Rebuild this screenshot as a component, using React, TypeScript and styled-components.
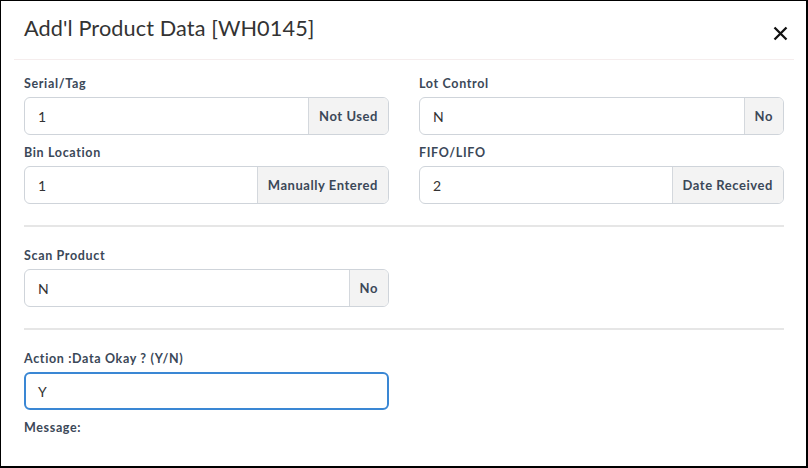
import React from "react";
import styled, { createGlobalStyle } from "styled-components";

const GlobalStyle = createGlobalStyle`
  html, body {
    margin: 0;
    padding: 0;
    background: #fff;
    font-family: Lato, "Open Sans", "Liberation Sans", sans-serif;
  }
  * { box-sizing: border-box; }
`;

const Modal = styled.div`
  width: 808px;
  height: 468px;
  background: #fff;
  border: 1px solid #000;
  border-right-width: 2px;
  border-bottom-width: 2px;
  display: flex;
  flex-direction: column;
`;

const Header = styled.div`
  height: 59px;
  margin: 0 12px 0 13px;
  padding: 0 6px 0 10px;
  border-bottom: 1px solid #f5eded;
  display: flex;
  align-items: center;
  justify-content: space-between;
`;

const Title = styled.h1`
  margin: 0 0 5px;
  font-size: 21.7px;
  font-weight: 400;
  color: #333;
  letter-spacing: 0.1px;
`;

const CloseButton = styled.button`
  border: 0;
  background: none;
  padding: 0;
  width: 16px;
  height: 16px;
  margin-top: 6px;
  display: flex;
  align-items: center;
  justify-content: center;
  cursor: pointer;
`;

const Body = styled.div`
  padding: 16px 23px 0;
  display: flex;
  flex-direction: column;
`;

const Grid = styled.div`
  display: grid;
  grid-template-columns: 365px 365px;
  column-gap: 30px;
  row-gap: 10px;
`;

const Field = styled.div`
  display: flex;
  flex-direction: column;
`;

const Label = styled.label`
  font-size: 12.5px;
  line-height: 16px;
  font-weight: 700;
  color: #3b4858;
  letter-spacing: 0.65px;
  margin-bottom: 5px;
`;

const InputGroup = styled.div<{ $focused?: boolean }>`
  display: flex;
  height: 38px;
  border: ${(p) => (p.$focused ? "2px solid #3a87d4" : "1px solid #cfd4da")};
  border-radius: 6px;
  overflow: hidden;
  background: #fff;
`;

const Value = styled.div<{ $focused?: boolean }>`
  flex: 1;
  display: flex;
  align-items: center;
  padding-left: ${(p) => (p.$focused ? "12px" : "13px")};
  font-size: 14px;
  color: #333;
`;

const Addon = styled.div`
  display: flex;
  align-items: center;
  padding: 0 10px;
  background: #f3f3f3;
  border-left: 1px solid #d4d8dd;
  font-size: 13px;
  font-weight: 700;
  color: #3b4858;
  letter-spacing: 0.55px;
`;

const Divider = styled.hr`
  margin: 21px 0 21px;
  border: 0;
  height: 2px;
  background: #e6e6e6;
  width: 760px;
`;

const Message = styled.div`
  margin-top: 10px;
  font-size: 12.5px;
  line-height: 16px;
  font-weight: 700;
  color: #3b4858;
  letter-spacing: 0.65px;
`;

type InputFieldProps = {
  label: string;
  value: string;
  addon?: string;
  focused?: boolean;
};

const InputField: React.FC<InputFieldProps> = ({ label, value, addon, focused }) => (
  <Field>
    <Label>{label}</Label>
    <InputGroup $focused={focused}>
      <Value $focused={focused}>{value}</Value>
      {addon && <Addon>{addon}</Addon>}
    </InputGroup>
  </Field>
);

export default function App() {
  return (
    <>
      <GlobalStyle />
      <Modal>
        <Header>
          <Title>Add'l Product Data [WH0145]</Title>
          <CloseButton aria-label="Close">
            <svg width="15" height="15" viewBox="0 0 15 15">
              <path d="M1.5 1.5 L13.5 13.5 M13.5 1.5 L1.5 13.5" stroke="#111" strokeWidth="2.3" strokeLinecap="butt" />
            </svg>
          </CloseButton>
        </Header>
        <Body>
          <Grid>
            <InputField label="Serial/Tag" value="1" addon="Not Used" />
            <InputField label="Lot Control" value="N" addon="No" />
            <InputField label="Bin Location" value="1" addon="Manually Entered" />
            <InputField label="FIFO/LIFO" value="2" addon="Date Received" />
          </Grid>
          <Divider />
          <Grid>
            <InputField label="Scan Product" value="N" addon="No" />
          </Grid>
          <Divider />
          <Grid>
            <InputField label="Action :Data Okay ? (Y/N)" value="Y" focused />
          </Grid>
          <Message>Message:</Message>
        </Body>
      </Modal>
    </>
  );
}
